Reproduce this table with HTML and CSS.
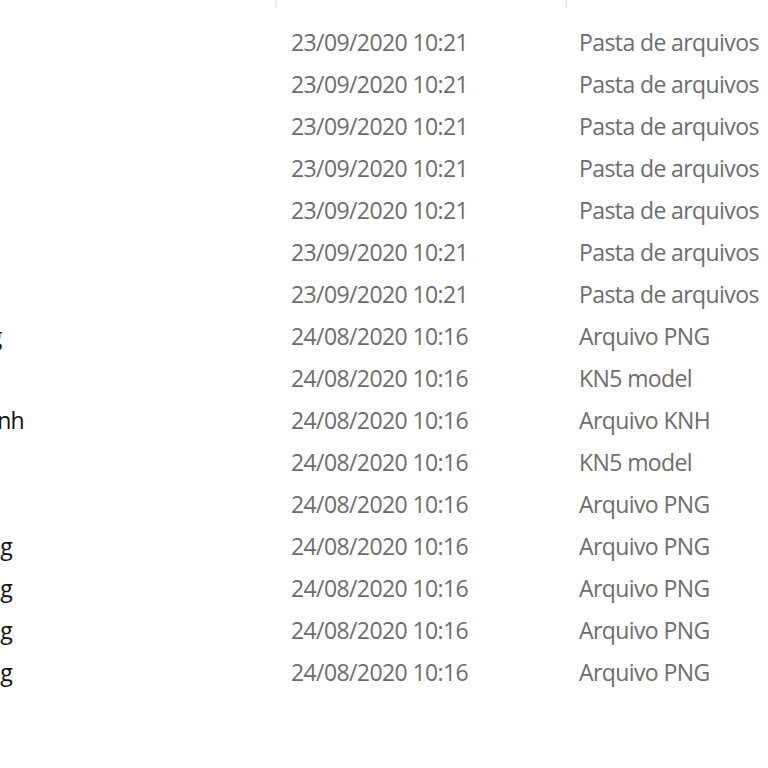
FILE: index.html
```html
<!DOCTYPE html>
<html lang="pt-BR">
<head>
    <meta charset="UTF-8">
    <meta name="viewport" content="width=device-width, initial-scale=1.0">
    <title>Detalhes</title>
    <link rel="stylesheet" href="styles.css">
</head>
<body>
    <div class="details">
        <div class="details-header">
            <div class="col-head name-head"></div>
            <div class="col-head date-head"></div>
            <div class="col-head type-head"></div>
        </div>

        <div class="row">
            <div class="cell name">animations</div>
            <div class="cell date">23/09/2020 10:21</div>
            <div class="cell type">Pasta de arquivos</div>
        </div>
        <div class="row">
            <div class="cell name">data</div>
            <div class="cell date">23/09/2020 10:21</div>
            <div class="cell type">Pasta de arquivos</div>
        </div>
        <div class="row">
            <div class="cell name">extension</div>
            <div class="cell date">23/09/2020 10:21</div>
            <div class="cell type">Pasta de arquivos</div>
        </div>
        <div class="row">
            <div class="cell name">sfx</div>
            <div class="cell date">23/09/2020 10:21</div>
            <div class="cell type">Pasta de arquivos</div>
        </div>
        <div class="row">
            <div class="cell name">skins</div>
            <div class="cell date">23/09/2020 10:21</div>
            <div class="cell type">Pasta de arquivos</div>
        </div>
        <div class="row">
            <div class="cell name">texture</div>
            <div class="cell date">23/09/2020 10:21</div>
            <div class="cell type">Pasta de arquivos</div>
        </div>
        <div class="row">
            <div class="cell name">ui</div>
            <div class="cell date">23/09/2020 10:21</div>
            <div class="cell type">Pasta de arquivos</div>
        </div>
        <div class="row">
            <div class="cell name">body_shadow.png</div>
            <div class="cell date">24/08/2020 10:16</div>
            <div class="cell type">Arquivo PNG</div>
        </div>
        <div class="row">
            <div class="cell name">collider.kn5</div>
            <div class="cell date">24/08/2020 10:16</div>
            <div class="cell type">KN5 model</div>
        </div>
        <div class="row">
            <div class="cell name">driver_base_pos.knh</div>
            <div class="cell date">24/08/2020 10:16</div>
            <div class="cell type">Arquivo KNH</div>
        </div>
        <div class="row">
            <div class="cell name">gt3_car.kn5</div>
            <div class="cell date">24/08/2020 10:16</div>
            <div class="cell type">KN5 model</div>
        </div>
        <div class="row">
            <div class="cell name">logo.png</div>
            <div class="cell date">24/08/2020 10:16</div>
            <div class="cell type">Arquivo PNG</div>
        </div>
        <div class="row">
            <div class="cell name">tyre_0_shadow.png</div>
            <div class="cell date">24/08/2020 10:16</div>
            <div class="cell type">Arquivo PNG</div>
        </div>
        <div class="row">
            <div class="cell name">tyre_1_shadow.png</div>
            <div class="cell date">24/08/2020 10:16</div>
            <div class="cell type">Arquivo PNG</div>
        </div>
        <div class="row">
            <div class="cell name">tyre_2_shadow.png</div>
            <div class="cell date">24/08/2020 10:16</div>
            <div class="cell type">Arquivo PNG</div>
        </div>
        <div class="row">
            <div class="cell name">tyre_3_shadow.png</div>
            <div class="cell date">24/08/2020 10:16</div>
            <div class="cell type">Arquivo PNG</div>
        </div>
    </div>
</body>
</html>
```

FILE: styles.css
```css
body {
    background-color: #fff;
    margin: 0;
    padding: 0;
    font-family: 'Open Sans', 'Noto Sans', sans-serif;
    font-size: 23px;
    letter-spacing: -0.6px;
    overflow: hidden;
}

/* the view is scrolled sideways, so the name column starts off screen */
.details {
    margin-left: -200px;
}

.details-header,
.row {
    display: grid;
    grid-template-columns: 477px 290px 1fr;
}

.details-header {
    height: 21px;
}

.col-head {
    height: 8px;
}

.name-head,
.date-head {
    border-right: 2px solid #ececec;
    box-sizing: border-box;
}

.date-head {
    margin-left: -2px; /* keep the grid lines where the cells start */
}

.row {
    height: 42px;
    line-height: 42px;
    white-space: nowrap;
}

.cell {
    overflow: hidden;
}

.name {
    padding-left: 19px;
    color: #111;
    letter-spacing: -0.75px;
}

.date {
    padding-left: 14px;
    color: #6d6d6d;
}

.type {
    padding-left: 12px;
    color: #6d6d6d;
}
```
